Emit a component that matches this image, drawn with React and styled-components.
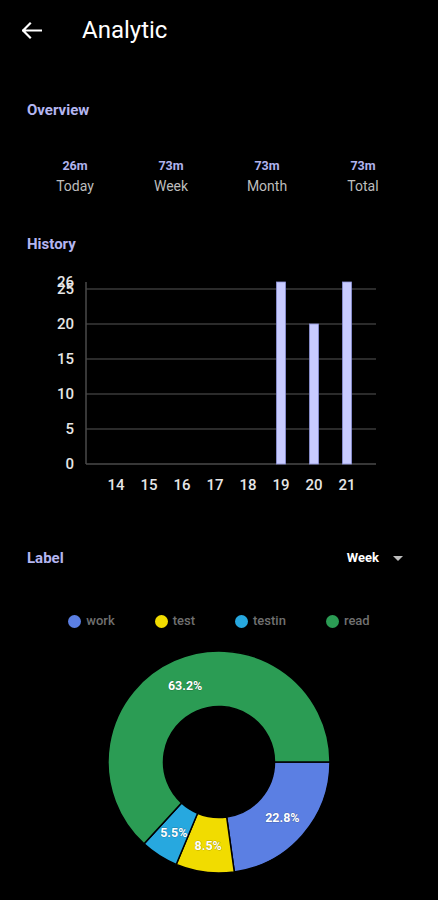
import React from "react";
import styled, { createGlobalStyle } from "styled-components";

const GlobalStyle = createGlobalStyle`
  html, body { margin: 0; padding: 0; background: #000; }
  body { font-family: Roboto, "Noto Sans", "Liberation Sans", sans-serif; }
`;

const Screen = styled.div`
  width: 438px;
  min-height: 900px;
  background: #000;
  display: flex;
  flex-direction: column;
`;

const TopBar = styled.header`
  height: 60px;
  display: flex;
  align-items: center;
  padding-left: 22px;
  gap: 40px;
`;

const BackButton = styled.button`
  width: 20px;
  height: 20px;
  padding: 0;
  border: 0;
  background: transparent;
  display: flex;
  align-items: center;
  justify-content: center;
`;

const Title = styled.h1`
  margin: 0;
  font-size: 24px;
  font-weight: 400;
  line-height: 28px;
  color: #fff;
`;

const Content = styled.main`
  padding: 0 27px;
  display: flex;
  flex-direction: column;
`;

const SectionTitle = styled.h2`
  margin: ${(p) => p.$mt}px 0 0;
  font-size: 15px;
  font-weight: 700;
  line-height: 20px;
  color: #b4b6f1;
`;

const StatsGrid = styled.div`
  display: grid;
  grid-template-columns: repeat(4, 1fr);
  margin-top: 38px;
`;

const Stat = styled.div`
  display: flex;
  flex-direction: column;
  align-items: center;
`;

const StatValue = styled.span`
  font-size: 12.5px;
  font-weight: 700;
  line-height: 16px;
  color: #b0b3ee;
`;

const StatLabel = styled.span`
  margin-top: 3px;
  font-size: 14px;
  line-height: 18px;
  color: #bdbdbd;
`;

const ChartSvg = styled.svg`
  display: block;
  margin-top: 10px;
  overflow: visible;
`;

const LabelRow = styled.div`
  display: flex;
  justify-content: space-between;
  align-items: center;
  margin-top: 44px;
`;

const Dropdown = styled.div`
  display: flex;
  align-items: center;
  gap: 14px;
  padding-right: 8px;
  font-size: 13px;
  font-weight: 700;
  line-height: 20px;
  color: #fff;
`;

const Caret = styled.span`
  width: 0;
  height: 0;
  border-left: 5.5px solid transparent;
  border-right: 5.5px solid transparent;
  border-top: 5.5px solid #bdbdbd;
`;

const Legend = styled.ul`
  list-style: none;
  margin: 45px 0 0;
  padding: 0;
  display: flex;
  justify-content: center;
  gap: 40px;
`;

const LegendItem = styled.li`
  display: flex;
  align-items: center;
  gap: 5px;
  font-size: 13px;
  font-weight: 500;
  line-height: 16px;
  color: #707070;
`;

const Dot = styled.span`
  width: 13px;
  height: 13px;
  border-radius: 50%;
  background: ${(p) => p.$color};
`;

const DonutSvg = styled.svg`
  display: block;
  margin: 18px auto 0;
`;

const stats = [
  { value: "26m", label: "Today" },
  { value: "73m", label: "Week" },
  { value: "73m", label: "Month" },
  { value: "73m", label: "Total" },
];

const days = [14, 15, 16, 17, 18, 19, 20, 21];
const values = [0, 0, 0, 0, 0, 26, 20, 26];

const slices = [
  { name: "work", pct: 22.8, color: "#5b7fe3" },
  { name: "test", pct: 8.5, color: "#f1dc00" },
  { name: "testin", pct: 5.5, color: "#27a8df" },
  { name: "read", pct: 63.2, color: "#2b9c54" },
];

function BarChart() {
  const axisX = 59;
  const base = 200;
  const unit = 7;
  const right = 349;
  const ticks = [0, 5, 10, 15, 20, 25, 26];
  return (
    <ChartSvg width="384" height="240" viewBox="0 0 384 240">
      {ticks.filter((t) => t !== 0 && t !== 26).map((t) => (
        <line key={t} x1={axisX} x2={right} y1={base - t * unit} y2={base - t * unit} stroke="#3a3a3a" strokeWidth="1.5" />
      ))}
      <line x1={axisX} x2={right} y1={base} y2={base} stroke="#4a4a4a" strokeWidth="1.5" />
      <line x1={axisX} x2={axisX} y1={base - 26 * unit} y2={base} stroke="#4a4a4a" strokeWidth="1.5" />
      {ticks.map((t) => (
        <text
          key={t}
          x="47"
          y={base - t * unit}
          textAnchor="end"
          dominantBaseline="central"
          fontFamily="Roboto, sans-serif"
          fontSize="15"
          fontWeight="500"
          fill="#e6e6e6"
        >
          {t}
        </text>
      ))}
      {days.map((d, i) => {
        const cx = 89 + 33 * i;
        const h = values[i] * unit;
        return (
          <g key={d}>
            {h > 0 && (
              <rect x={cx - 4.5} y={base - h} width="9" height={h} fill="#c8cbff" stroke="#8f95da" strokeWidth="0.8" />
            )}
            <text
              x={cx}
              y="221"
              textAnchor="middle"
              dominantBaseline="central"
              fontFamily="Roboto, sans-serif"
              fontSize="15"
              fontWeight="500"
              fill="#e6e6e6"
            >
              {d}
            </text>
          </g>
        );
      })}
    </ChartSvg>
  );
}

function arcPath(cx, cy, R, r, a0, a1) {
  const rad = (a) => (a * Math.PI) / 180;
  const p = (rr, a) => [cx + rr * Math.cos(rad(a)), cy + rr * Math.sin(rad(a))];
  const large = a1 - a0 > 180 ? 1 : 0;
  const [x0, y0] = p(R, a0);
  const [x1, y1] = p(R, a1);
  const [x2, y2] = p(r, a1);
  const [x3, y3] = p(r, a0);
  return `M${x0} ${y0} A${R} ${R} 0 ${large} 1 ${x1} ${y1} L${x2} ${y2} A${r} ${r} 0 ${large} 0 ${x3} ${y3} Z`;
}

function Donut() {
  const cx = 115;
  const cy = 115;
  const R = 111;
  const r = 55.5;
  let start = 0;
  const parts = slices.map((s) => {
    const sweep = (s.pct / 100) * 360;
    const a0 = start;
    const a1 = start + sweep;
    start = a1;
    const mid = ((a0 + a1) / 2) * (Math.PI / 180);
    const lr = 84;
    return { ...s, d: arcPath(cx, cy, R, r, a0, a1), lx: cx + lr * Math.cos(mid), ly: cy + lr * Math.sin(mid) };
  });
  return (
    <DonutSvg width="230" height="230" viewBox="0 0 230 230">
      {parts.map((p) => (
        <path key={p.name} d={p.d} fill={p.color} stroke="#000" strokeWidth="1.5" />
      ))}
      {parts.map((p) => (
        <text
          key={p.name + "-l"}
          x={p.lx}
          y={p.ly}
          textAnchor="middle"
          dominantBaseline="central"
          fontFamily="Roboto, sans-serif"
          fontSize="12.5"
          fontWeight="700"
          fill="#fff"
          style={{ paintOrder: "stroke" }}
          stroke="rgba(0,0,0,0.25)"
          strokeWidth="1"
        >
          {p.pct}%
        </text>
      ))}
    </DonutSvg>
  );
}

export default function App() {
  return (
    <>
      <GlobalStyle />
      <Screen>
        <TopBar>
          <BackButton aria-label="Back">
            <svg width="20" height="20" viewBox="0 0 20 20">
              <path d="M1 10.5H19M8 3.5L1 10.5L8 17.5" fill="none" stroke="#fff" strokeWidth="2.2" strokeLinecap="square" />
            </svg>
          </BackButton>
          <Title>Analytic</Title>
        </TopBar>
        <Content>
          <SectionTitle $mt={40}>Overview</SectionTitle>
          <StatsGrid>
            {stats.map((s) => (
              <Stat key={s.label}>
                <StatValue>{s.value}</StatValue>
                <StatLabel>{s.label}</StatLabel>
              </Stat>
            ))}
          </StatsGrid>
          <SectionTitle $mt={39}>History</SectionTitle>
          <BarChart />
          <LabelRow>
            <SectionTitle $mt={0}>Label</SectionTitle>
            <Dropdown>
              Week
              <Caret />
            </Dropdown>
          </LabelRow>
          <Legend>
            {slices.map((s) => (
              <LegendItem key={s.name}>
                <Dot $color={s.color} />
                {s.name}
              </LegendItem>
            ))}
          </Legend>
          <Donut />
        </Content>
      </Screen>
    </>
  );
}
